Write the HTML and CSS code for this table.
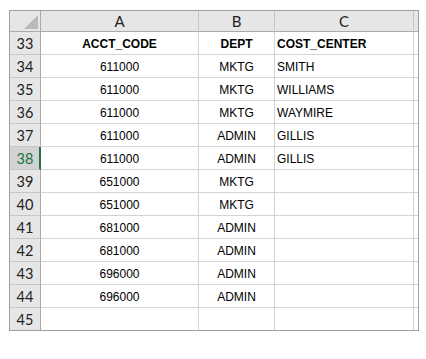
FILE: index.html
```html
<!DOCTYPE html>
<html>
<head>
<meta charset="utf-8">
<link rel="stylesheet" href="styles.css">
</head>
<body>
<div class="sheet">
  <div class="grid">
    <div class="corner hd"><span class="tri"></span></div>
    <div class="colhd">A</div>
    <div class="colhd">B</div>
    <div class="colhd">C</div>
    <div class="colhd last"></div>

    <div class="rowhd">33</div><div class="cell ctr b">ACCT_CODE</div><div class="cell ctr b">DEPT</div><div class="cell b">COST_CENTER</div><div class="cell last"></div>
    <div class="rowhd">34</div><div class="cell ctr">611000</div><div class="cell ctr">MKTG</div><div class="cell">SMITH</div><div class="cell last"></div>
    <div class="rowhd">35</div><div class="cell ctr">611000</div><div class="cell ctr">MKTG</div><div class="cell">WILLIAMS</div><div class="cell last"></div>
    <div class="rowhd">36</div><div class="cell ctr">611000</div><div class="cell ctr">MKTG</div><div class="cell">WAYMIRE</div><div class="cell last"></div>
    <div class="rowhd">37</div><div class="cell ctr">611000</div><div class="cell ctr">ADMIN</div><div class="cell">GILLIS</div><div class="cell last"></div>
    <div class="rowhd sel">38</div><div class="cell ctr">611000</div><div class="cell ctr">ADMIN</div><div class="cell">GILLIS</div><div class="cell last"></div>
    <div class="rowhd">39</div><div class="cell ctr">651000</div><div class="cell ctr">MKTG</div><div class="cell"></div><div class="cell last"></div>
    <div class="rowhd">40</div><div class="cell ctr">651000</div><div class="cell ctr">MKTG</div><div class="cell"></div><div class="cell last"></div>
    <div class="rowhd">41</div><div class="cell ctr">681000</div><div class="cell ctr">ADMIN</div><div class="cell"></div><div class="cell last"></div>
    <div class="rowhd">42</div><div class="cell ctr">681000</div><div class="cell ctr">ADMIN</div><div class="cell"></div><div class="cell last"></div>
    <div class="rowhd">43</div><div class="cell ctr">696000</div><div class="cell ctr">ADMIN</div><div class="cell"></div><div class="cell last"></div>
    <div class="rowhd">44</div><div class="cell ctr">696000</div><div class="cell ctr">ADMIN</div><div class="cell"></div><div class="cell last"></div>
    <div class="rowhd end">45</div><div class="cell end"></div><div class="cell end"></div><div class="cell end"></div><div class="cell last end"></div>
  </div>
</div>
</body>
</html>
```
FILE: styles.css
```css
html, body {
  margin: 0;
  padding: 0;
  background: #ffffff;
}
.sheet {
  padding: 10px 0 0 9px;
}
.grid {
  display: grid;
  width: 408px;
  grid-template-columns: 31px 158px 76px 139px 4px;
  grid-template-rows: 21px repeat(12, 23px) 22px;
  border: 1px solid #9f9f9f;
  font-family: "Liberation Sans", Arial, sans-serif;
  font-size: 12px;
  color: #000;
}
.grid > div {
  box-sizing: border-box;
  border-right: 1px solid #d4d4d4;
  border-bottom: 1px solid #d4d4d4;
  overflow: hidden;
  white-space: nowrap;
}
.grid > div.last {
  border-right: none;
}
.grid > div.end {
  border-bottom: none;
}
.corner {
  background: #e6e6e6;
  position: relative;
  border-right: 1px solid #ababab !important;
  border-bottom: 1px solid #ababab !important;
}
.tri {
  position: absolute;
  right: 2px;
  bottom: 2px;
  width: 0;
  height: 0;
  border-left: 14px solid transparent;
  border-bottom: 14px solid #b9b9b9;
}
.colhd {
  background: #e6e6e6;
  border-right: 1px solid #c6c6c6 !important;
  border-bottom: 1px solid #ababab !important;
  font-family: Lato, "Open Sans", sans-serif;
  font-size: 15px;
  color: #222;
  text-align: center;
  line-height: 20px;
}
.colhd.last {
  border-right: none !important;
}
.rowhd {
  background: #e6e6e6;
  border-right: 1px solid #ababab !important;
  border-bottom: 1px solid #c6c6c6 !important;
  font-family: Lato, "Open Sans", sans-serif;
  font-size: 14.5px;
  color: #222;
  text-align: center;
  line-height: 22px;
  padding-top: 1px;
}
.rowhd.end {
  border-bottom: none !important;
}
.rowhd.sel {
  background: #d2d2d2;
  color: #217346;
  border-right: 2px solid #217346 !important;
  padding-left: 1px;
}
.cell {
  line-height: 19px;
  padding: 3px 2px 0 2px;
}
.cell.ctr {
  text-align: center;
}
.cell.b {
  font-weight: bold;
}
```
